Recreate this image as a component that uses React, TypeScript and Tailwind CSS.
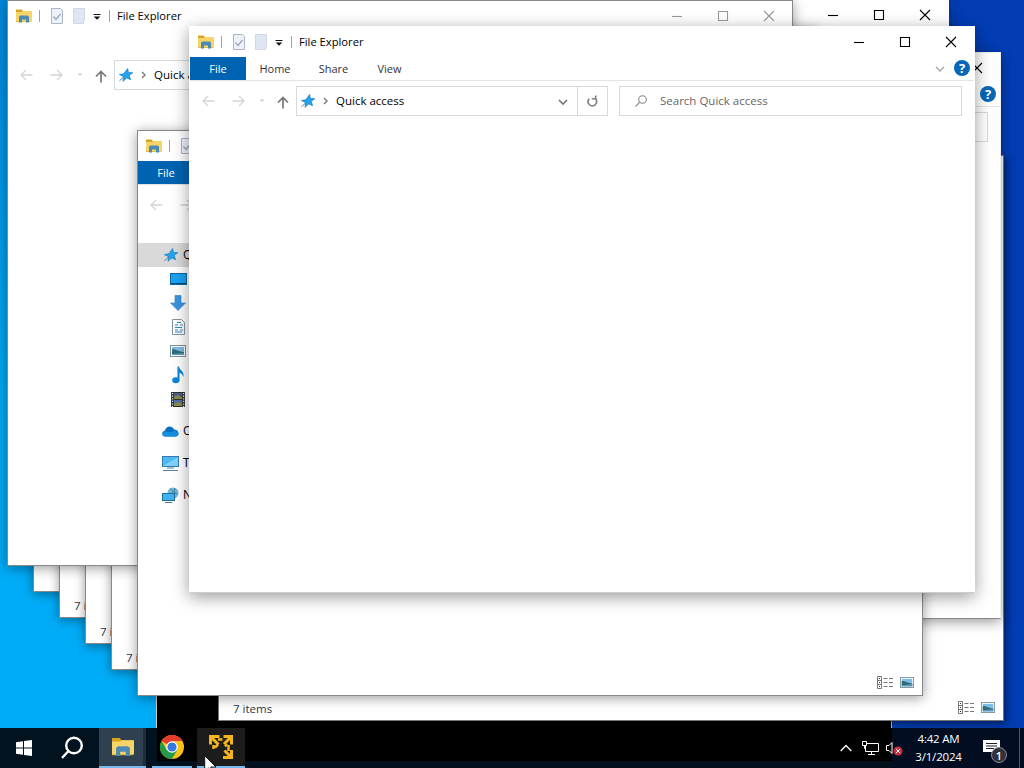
import React from "react";
import clsx from "clsx";

interface ExplorerProps {
  className: string;
  inactive?: boolean;
  ribbon?: boolean;
  sidebar?: boolean;
  status?: string;
  blank?: boolean;
  // only the right edge of the window shows
  covered?: boolean;
}

function FolderIcon({ size = 16 }: { size?: number }) {
  return (
    <svg className="shrink-0" width={size} height={size} viewBox="0 0 16 16">
      <path d="M0 1.5h5.5l1.5 1.5h8v11H0z" fill="#d9a520" />
      <path d="M0 4h6l1-1h9v10.500H0z" fill="#f8d468" />
      <path d="M3 14.500V8.500L4.500 7.500h7L13 8.500v6h-3v-3H6v3z" fill="#4a8ab5" />
    </svg>
  );
}

function StarIcon() {
  return (
    <svg className="shrink-0" width="14" height="14" viewBox="0 0 14 14">
      <path
        d="M8.600.500l.8 4 4.400.200-3.600 2.700 1.400 4.300-3.800-1.800L4 13.300l.7-4.600L.4 6.600l4.400-.9z"
        fill="#22a4ee"
        stroke="#187cc0"
        strokeWidth=".7"
      />
      <path d="M.5 12.800L5 8.600" stroke="#4d7f9e" />
    </svg>
  );
}

function HelpIcon() {
  return (
    <span className="flex h-4 w-4 shrink-0 items-center justify-center rounded-full bg-[#0867b8] text-[13px] leading-none font-bold text-white">
      ?
    </span>
  );
}

function PictureIcon({ wide = false }: { wide?: boolean }) {
  return (
    <svg width={wide ? 16 : 14} height={wide ? 12 : 11} viewBox="0 0 16 12" preserveAspectRatio="none">
      <rect x=".5" y=".5" width="15" height="11" fill="#fff" stroke="#7c929d" />
      <rect x="2" y="2" width="12" height="8" fill="#7dbce8" />
      <path d="M2 4.500c3-1 4 1.500 12 2.500v3H2z" fill="#316b73" />
      <path d="M2 9l12-1v2H2z" fill="#5a9bc9" />
    </svg>
  );
}

function QuickToolbar({ inactive, covered }: { inactive?: boolean; covered?: boolean }) {
  return (
    <div className="flex h-[30px] shrink-0 items-center pl-2">
      <FolderIcon />
      <span className="ml-[7px] h-3 w-px bg-[#a0a0a0]" />
      <svg className="ml-[11px] shrink-0" width="12" height="16" viewBox="0 0 12 16">
        <path d="M.5.500h9l2 2v13H.5z" fill="#edf1fa" stroke="#aab6c8" />
        <path d="M2.500 8.500l2.500 3 4.500-5.500" fill="none" stroke="#98a8c0" strokeWidth="1.300" />
      </svg>
      <svg className="ml-[10px] shrink-0" width="12" height="16" viewBox="0 0 12 16">
        <path d="M.5.500h11v10.500l-1 4.500H.5z" fill="#dfe5f2" stroke="#d1d7e4" />
      </svg>
      <svg className="ml-2 shrink-0" width="8" height="7" viewBox="0 0 8 7">
        <path d="M.5 1.500h7" stroke="#111" />
        <path d="M.7 3.500h6.600L4 6.800z" fill="#111" />
      </svg>
      <span className="ml-[8px] h-3 w-px bg-[#a0a0a0]" />
      {!covered && (
        <span className="ml-[7px] text-[11.2px] whitespace-nowrap text-black">File Explorer</span>
      )}
      <div className={clsx("ml-auto flex", inactive ? "text-[#999]" : "text-black")}>
        {["M1 6.500h10", "M1.500 1.500h9v9h-9z", "M1 1l10 10M11 1L1 11"].map((d) => (
          <span key={d} className="flex w-[46px] justify-center">
            <svg width="12" height="12" viewBox="0 0 12 12" fill="none" stroke="currentColor" strokeWidth="1.100">
              <path d={d} />
            </svg>
          </span>
        ))}
      </div>
    </div>
  );
}

function Ribbon({ covered }: { covered?: boolean }) {
  return (
    <div className="flex h-6 shrink-0 items-center border-b border-[#e4e4e4] text-[11px] text-[#333]">
      {!covered && (
        <>
          <span className="flex h-[23px] w-14 items-center justify-center bg-[#0063b1] pt-[2px] text-white">File</span>
          <span className="flex w-[58px] justify-center pt-[2px]">Home</span>
          <span className="flex w-[59px] justify-center pt-[2px]">Share</span>
          <span className="flex w-[53px] justify-center pt-[2px]">View</span>
        </>
      )}
      <svg className="mr-[9px] ml-auto" width="10" height="6" viewBox="0 0 10 6" fill="none" stroke="#aaa" strokeWidth="1.500">
        <path d="M1 1l4 4 4-4" />
      </svg>
      <span className="mr-[4px] pb-px">
        <HelpIcon />
      </span>
    </div>
  );
}

function NavRow({ covered }: { covered?: boolean }) {
  return (
    <div className="flex h-10 shrink-0 items-center pl-[12px] text-[11.500px]">
      <svg width="13" height="12" viewBox="0 0 13 12" fill="none" stroke="#d4d4d4" strokeWidth="1.300">
        <path d="M12.500 6H1M6 1L1 6l5 5" />
      </svg>
      <svg className="ml-[17px]" width="13" height="12" viewBox="0 0 13 12" fill="none" stroke="#d4d4d4" strokeWidth="1.300">
        <path d="M.5 6H12M7 1l5 5-5 5" />
      </svg>
      <svg className="ml-[14px]" width="6" height="4" viewBox="0 0 6 4">
        <path d="M.5.500h5L3 3z" fill="#d0d0d0" />
      </svg>
      <svg className="mt-[2px] ml-[12px]" width="12" height="13" viewBox="0 0 12 13" fill="none" stroke="#777" strokeWidth="1.700">
        <path d="M6 12.500V1.500M1 6.500l5-5 5 5" />
      </svg>
      <div className="ml-[7px] flex h-[30px] w-[312px] shrink-0 items-center border border-[#d9d9d9] bg-white pl-[4px]">
        <StarIcon />
        <svg className="ml-2" width="5" height="8" viewBox="0 0 5 8" fill="none" stroke="#777" strokeWidth="1.400">
          <path d="M1 1l3 3-3 3" />
        </svg>
        {!covered && <span className="ml-[8px] whitespace-nowrap text-black">Quick access</span>}
        <svg className="mt-[2px] mr-[9px] ml-auto" width="10" height="7" viewBox="0 0 10 7" fill="none" stroke="#777" strokeWidth="1.700">
          <path d="M1 1l4 4 4-4" />
        </svg>
        <span className="flex h-7 w-[30px] items-center justify-center border-l border-[#d9d9d9]">
          <svg width="11" height="12" viewBox="0 0 11 12" fill="none" stroke="#808080" strokeWidth="1.600">
            <path d="M2.200 3.800a4.200 4.200 0 1 0 6.500.3" />
            <path d="M4.800 3.700h3.900V.500" />
          </svg>
        </span>
      </div>
      <div className="ml-[11px] flex h-[30px] w-[343px] items-center border border-[#d9d9d9] bg-white pl-[14px] text-[#666]">
        <svg width="14" height="14" viewBox="0 0 14 14" fill="none" stroke="#888" strokeWidth="1.100">
          <circle cx="8.500" cy="5.500" r="3.800" />
          <path d="M5.800 8.200L1.500 12.500" />
        </svg>
        {!covered && <span className="ml-3">Search Quick access</span>}
      </div>
    </div>
  );
}

const PLACES = [
  <svg width="17" height="12" viewBox="0 0 17 12">
    <rect x=".5" y=".5" width="16" height="11" fill="#1ba1f3" stroke="#0f689f" />
    <path d="M1 10.500h15" stroke="#0a4e80" />
  </svg>,
  <svg width="16" height="16" viewBox="0 0 16 16">
    <path d="M5 .5h6V8h4.500L8 15.500.5 8H5z" fill="#3a93e0" stroke="#2c7cc4" strokeWidth=".6" />
  </svg>,
  <svg width="13" height="16" viewBox="0 0 13 16" fill="none">
    <path d="M.5.500h9l3 3v12H.5z" fill="#fff" stroke="#8294a0" />
    <path d="M5 3.500h4M3 6h3M8 6h3M3 8.500h7M3 11h3M8 11h3M3 13h7" stroke="#368cc0" />
  </svg>,
  <PictureIcon wide />,
  <svg width="12" height="18" viewBox="0 0 12 18">
    <ellipse cx="3.800" cy="14.300" rx="3.600" ry="3" fill="#0a86d8" />
    <path d="M7 .5c.5 3.800 5.600 4.700 4.400 10.500-.8-2.800-2.200-3.800-3.900-4.200V14.500H5.500V.5z" fill="#0a86d8" />
  </svg>,
  <svg width="14" height="15" viewBox="0 0 14 15">
    <rect width="14" height="15" fill="#303030" />
    <rect x="3" y="1" width="8" height="6" fill="#48608f" />
    <rect x="3" y="8" width="8" height="6" fill="#5470a5" />
    <path d="M3 5l4-2 4 3v1H3zM3 12l5-2 3 2v2H3z" fill="#8b8d45" />
    <path d="M1.500 1v14M12.500 1v14" stroke="#ddd" strokeWidth="1.300" strokeDasharray="1.300 1.300" />
  </svg>,
];

function Sidebar() {
  return (
    <div className="mt-[18px] w-[51px] overflow-hidden text-xs whitespace-nowrap text-black">
      <div className="flex h-6 items-center bg-[#d9d9d9] pl-[26px]">
        <StarIcon />
        <span className="ml-[5px]">Quick access</span>
      </div>
      {PLACES.map((icon, i) => (
        <div key={i} className="flex h-6 items-center">
          <span className="ml-[30px] flex w-5 shrink-0 justify-center">{icon}</span>
        </div>
      ))}
      <div className="mt-1 flex h-8 items-center pl-[24px]">
        <svg className="shrink-0" width="17" height="12" viewBox="0 0 17 12">
          <path d="M3 11.500C-1 11-.5 6 3 5.500 4 1 10 0 12 4.500c5-.2 6 6 2 7z" fill="#0a70c0" />
          <path d="M3 11.500C0 11 0 7 3 6.500l5 1 5-2c4 1 5 5 1 6z" fill="#1490df" />
        </svg>
        <span className="ml-[4px]">OneDrive</span>
      </div>
      <div className="flex h-8 items-center pl-[24px]">
        <svg className="shrink-0" width="17" height="16" viewBox="0 0 17 16">
          <rect x=".5" y="1.500" width="16" height="10" fill="#4db8f2" stroke="#357da8" />
          <path d="M1 11L16 2v9z" fill="#80d2fa" />
          <path d="M5 13h7M1 15.500h15" stroke="#5b849e" />
        </svg>
        <span className="ml-[4px]">This PC</span>
      </div>
      <div className="flex h-8 items-center pl-[24px]">
        <svg className="shrink-0" width="17" height="16" viewBox="0 0 17 16">
          <circle cx="11" cy="6" r="5.500" fill="#73b7d8" />
          <path d="M8 1.500l3 3-1 3M13 1l-1 4 3 2" stroke="#387e9f" fill="none" />
          <rect x=".5" y="6.500" width="12" height="7" fill="#3eb3f3" stroke="#236d9a" />
          <path d="M3 15.500h7" stroke="#4e7994" />
        </svg>
        <span className="ml-[4px]">Network</span>
      </div>
    </div>
  );
}

function StatusBar({ text }: { text: string }) {
  return (
    <div className="mt-auto flex h-[25px] shrink-0 items-center pr-[8px] pl-[14px] text-[11.500px] text-[#303848]">
      <span className="pt-[2px]">{text}</span>
      <svg className="ml-auto" width="16" height="13" viewBox="0 0 16 13" fill="none" stroke="#777">
        <path d="M.5.500h4v12h-4zM.5 4.500h4M.5 8.500h4" />
        <path d="M2 2.500h1M2 6.500h1M2 10.500h1" stroke="#333" />
        <path d="M6.500 2.500h4M12 2.500h4M6.500 6.500h4M12 6.500h4M6.500 10.500h4M12 10.500h4" />
      </svg>
      <span className="ml-[7px]">
        <PictureIcon />
      </span>
    </div>
  );
}

function Explorer({ className, inactive, ribbon, sidebar, status, blank, covered }: ExplorerProps) {
  return (
    <section className={clsx("absolute flex flex-col overflow-hidden border bg-white", className)}>
      {!blank && (
        <>
          <QuickToolbar inactive={inactive} covered={covered || sidebar} />
          {ribbon ? <Ribbon covered={covered} /> : <div className="h-6 shrink-0" />}
          <NavRow covered={covered || sidebar} />
        </>
      )}
      {sidebar && <Sidebar />}
      {status !== undefined && <StatusBar text={status} />}
    </section>
  );
}

function ChromeIcon() {
  return (
    <svg width="24" height="24" viewBox="0 0 24 24">
      <circle cx="12" cy="12" r="12" fill="#fbc116" />
      <path d="M12 12L1.600 6A12 12 0 0 1 22.400 6H12z" fill="#e33b2e" />
      <path d="M1.600 6A12 12 0 0 0 12 24l5.200-9L12 12 6.800 15z" fill="#249c4b" />
      <circle cx="12" cy="12" r="5.800" fill="#fff" />
      <circle cx="12" cy="12" r="4.600" fill="#3478e5" />
    </svg>
  );
}

function ArrowsIcon() {
  return (
    <svg width="24" height="24" viewBox="0 0 24 24" fill="none" stroke="#f4b51b" strokeWidth="3">
      <path d="M1.500 9.500v-8h9M14.500 1.500h8v8M22.500 15v7.500H14" />
      <path d="M2 2l7.500 7.500M22 2l-7 7M15.500 15.500l6.500 6.500" />
      <path d="M9 4.500h4.500M4.500 10v4M19.500 10v6M9 9.500l-3 3M18 9l-2 2.500" strokeWidth="2.500" />
    </svg>
  );
}

function Taskbar() {
  return (
    <footer className="absolute inset-x-0 bottom-0 flex h-10 bg-[#02131f]">
      <div className="flex w-12 items-center justify-center">
        <svg width="16" height="16" viewBox="0 0 16 16" fill="#fff">
          <path d="M0 2.200l7-1v6.300H0zM8 1l8-1v7.500H8zM0 8.500h7v6.300l-7-1zM8 8.500h8V16l-8-1z" />
        </svg>
      </div>
      <div className="flex w-[51px] items-center pl-[12px]">
        <svg width="24" height="24" viewBox="0 0 24 24" fill="none" stroke="#fff" strokeWidth="2.400">
          <circle cx="14" cy="9.500" r="7.800" />
          <path d="M8.500 15L2 22" />
        </svg>
      </div>
      <div className="flex w-[44px] items-center justify-center border-b-2 border-[#76b9ed] bg-[#2f4150] pl-[3px]">
        <FolderIcon size={22} />
      </div>
      <div className="w-[3px] border-b-2 border-[#76b9ed] bg-[#1b303d]" />
      <div className="w-[11px]" />
      <div className="flex min-w-0 flex-1 bg-linear-to-b from-black from-82% to-[#02101d] to-82%">
        <div className="-ml-[5px] flex w-10 items-center justify-center border-b-2 border-[#76b9ed]">
          <ChromeIcon />
        </div>
        <div className="ml-[5px] flex w-12 items-center justify-center border-b-2 border-[#76b9ed] bg-[#1c1c1c]">
          <ArrowsIcon />
        </div>
        <div className="relative z-10 mr-[-12px] ml-auto flex items-center">
          <svg width="12" height="8" viewBox="0 0 12 8" fill="none" stroke="#fff" strokeWidth="1.300">
            <path d="M.7 7L6 1.500 11.300 7" />
          </svg>
          <svg className="ml-[10px]" width="17" height="14" viewBox="0 0 17 14" fill="none" stroke="#fff">
            <path d="M5 2.500h11.500v8H3.500V5M6 13.500h7M9.500 10.500v3" />
            <path d="M.5.500h4v4h-4zM2.500 4.500v3h1" />
          </svg>
          <svg className="ml-[7px]" width="18" height="16" viewBox="0 0 18 16" fill="none" stroke="#fff">
            <path d="M.5 5.500h2.500L6 2.500v11L3 10.500H.5z" />
            <circle cx="12" cy="11" r="4.500" fill="#c7303d" stroke="none" />
            <path d="M10 9l4 4M14 9l-4 4" />
          </svg>
        </div>
      </div>
      <div className="flex w-[132px] items-center bg-[#020d22]">
        <div className="ml-[18px] w-[57px] text-center text-[11.500px] leading-[18px] tracking-[-0.2px] whitespace-nowrap text-white">
          <div>4:42 AM</div>
          <div>3/1/2024</div>
        </div>
        <div className="relative ml-[16px]">
          <svg width="18" height="16" viewBox="0 0 18 16">
            <path d="M0 0h17v12h-4v4l-4-4H0z" fill="#fff" />
            <path d="M3 3.500h11M3 6h11M3 8.500h8" stroke="#17212e" />
          </svg>
          <span className="absolute top-[7px] left-[8px] flex h-4 w-4 items-center justify-center rounded-full border border-[#889] bg-[#303238] text-[11px] leading-none font-semibold text-white">
            1
          </span>
        </div>
        <span className="mr-1 ml-auto h-10 w-px bg-[#4a5568]" />
      </div>
    </footer>
  );
}

export default function App() {
  return (
    <main className="relative h-screen w-screen overflow-hidden bg-linear-to-r from-[#00acf7] from-15% to-[#023db4] to-90% font-['Open_Sans','Noto_Sans',sans-serif]">
      <div className="absolute top-0 left-0 h-[420px] w-2 bg-linear-to-b from-[#0089dc] to-transparent" />
      <div className="absolute top-[400px] left-[156px] h-[340px] w-[736px] border-x border-[#ccc] bg-black" />
      <Explorer className="top-[155px] left-[218px] h-[566px] w-[786px] border-[#777] shadow-[2px_3px_8px_rgba(0,0,0,0.5)]" blank status="7 items" />
      <Explorer className="top-[52px] left-[215px] h-[567px] w-[786px] border-[#eee] border-b-[#888] shadow-[0_3px_12px_rgba(0,0,0,0.4)]" ribbon covered />
      <Explorer className="-top-px left-[163px] h-[567px] w-[786px] border-white shadow-[0_3px_12px_rgba(0,0,0,0.35)]" covered />
      <Explorer className="top-[27px] left-[33px] h-[565px] w-[785px] border-[#888] shadow-[0_2px_10px_rgba(0,0,0,0.4)]" blank />
      <Explorer className="top-[53px] left-[59px] h-[565px] w-[785px] border-[#888] shadow-[0_2px_10px_rgba(0,0,0,0.4)]" blank status="7 items" />
      <Explorer className="top-[79px] left-[85px] h-[565px] w-[785px] border-[#888] shadow-[0_2px_10px_rgba(0,0,0,0.4)]" blank status="7 items" />
      <Explorer className="top-[105px] left-[111px] h-[565px] w-[785px] border-[#888] shadow-[0_2px_10px_rgba(0,0,0,0.4)]" blank status="7 items" />
      <Explorer className="top-0 left-[7px] h-[566px] w-[786px] border-[#888] shadow-[0_2px_12px_rgba(0,0,0,0.4)]" inactive />
      <Explorer className="top-[130px] left-[137px] h-[566px] w-[786px] border-[#888] shadow-[0_2px_12px_rgba(0,0,0,0.4)]" ribbon sidebar status="" />
      <Explorer className="top-[26px] left-[189px] h-[567px] w-[786px] border-white border-b-[#ccc] shadow-[0_4px_16px_rgba(0,0,0,0.4)]" ribbon />
      <Taskbar />
      <svg className="absolute top-[755px] left-[204px]" width="13" height="20" viewBox="0 0 13 20">
        <path d="M.7.700v15.500l3.600-3.400 2.500 6 2.500-1-2.600-5.800h5.300z" fill="#fff" stroke="#111" />
      </svg>
    </main>
  );
}
